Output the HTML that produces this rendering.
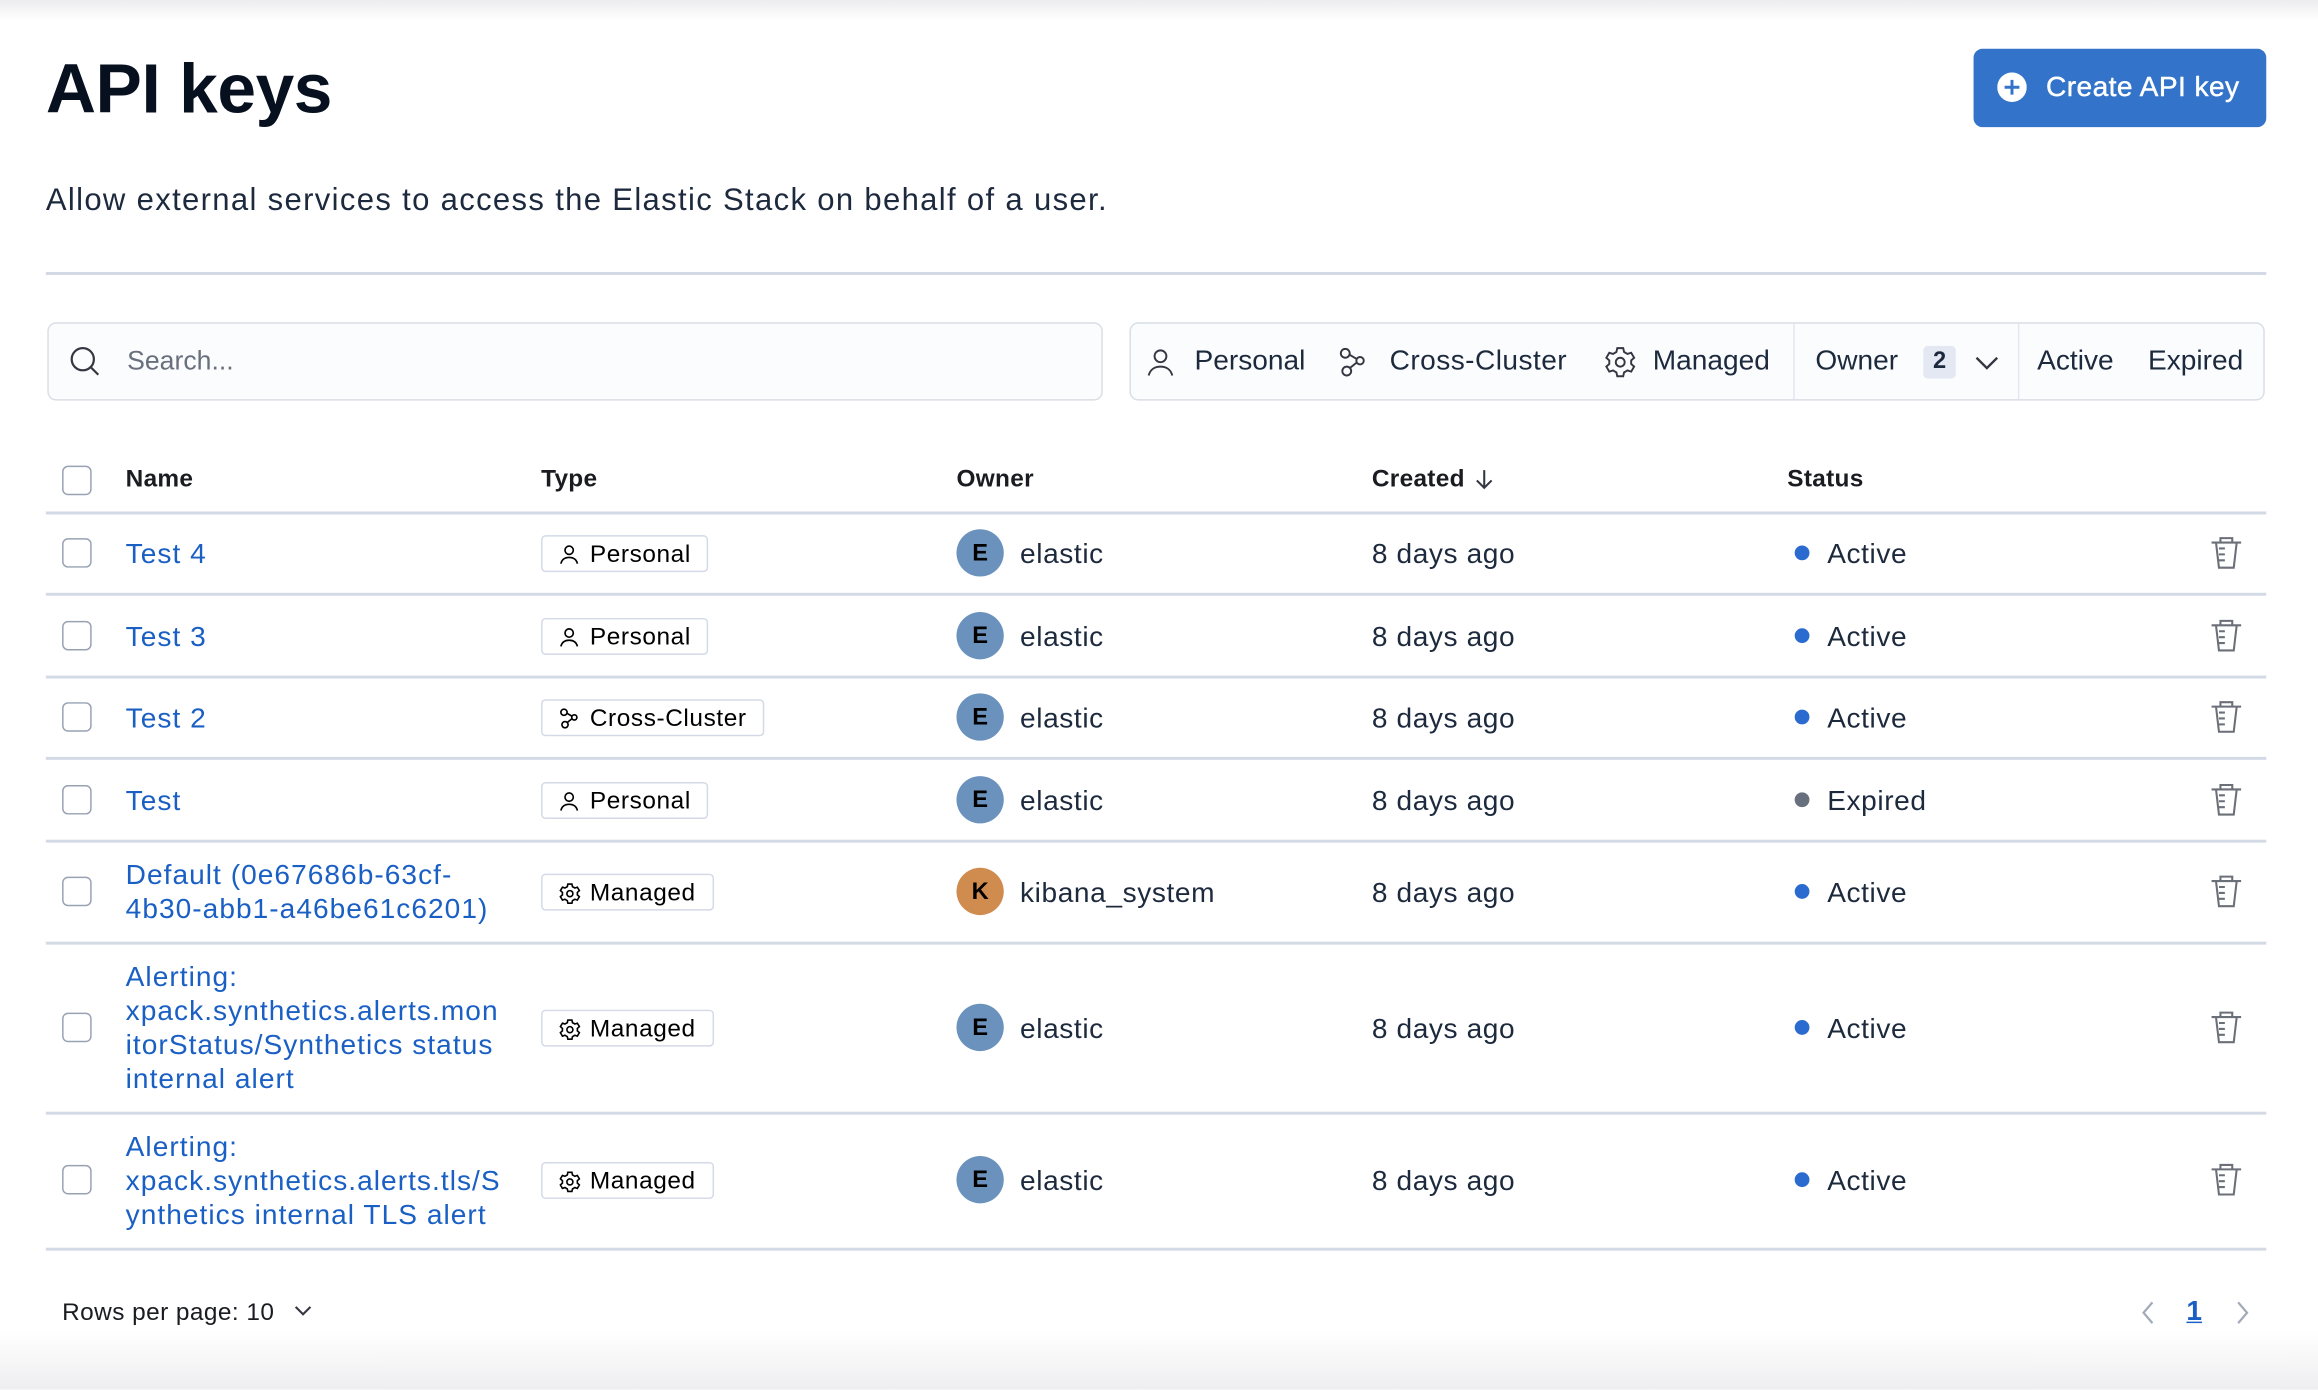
<!DOCTYPE html>
<html><head><meta charset="utf-8"><style>
html,body{margin:0;padding:0;width:2318px;height:1390px;overflow:hidden;background:#fff}
#w{position:absolute;left:0;top:0;width:1568px;height:940px;transform:scale(1.47832);transform-origin:0 0;font-family:"Liberation Sans",sans-serif;color:#1d2a3e}
.a{position:absolute;white-space:nowrap}
.hr{position:absolute;left:31px;width:1502px;height:1px;background:#d3dae6}
.cb{position:absolute;left:42px;width:20px;height:20px;border:1px solid #98a2b3;border-radius:4px;box-sizing:border-box;background:#fff}
.name{position:absolute;left:85px;color:#1a5fc4;font-size:19px;line-height:23px;letter-spacing:0.7px}
.badge{position:absolute;left:366px;height:25px;border:1px solid #d3dae6;border-radius:3px;box-sizing:border-box;font-size:16.5px;color:#000;padding:0 11px 0 32px;line-height:25px;letter-spacing:0.4px}
.badge svg{position:absolute;left:11px;top:5px}
.av{position:absolute;left:647px;width:32px;height:32px;border-radius:50%;background:#6b92bd;color:#000;font-size:16px;font-weight:bold;text-align:center;line-height:33px}
.txt{position:absolute;font-size:19px;color:#1d2a3e;line-height:23px;letter-spacing:0.4px}
.dot{position:absolute;left:1214px;width:10px;height:10px;border-radius:50%;background:#2b6bcf}
.del{position:absolute;left:1495px}
.h{position:absolute;top:315px;font-size:16.5px;font-weight:bold;color:#1a1c21;letter-spacing:0.2px}
</style></head><body><div id="w">
<div style="position:absolute;left:0;top:0;width:1568px;height:14px;background:linear-gradient(#ececee,#fff)"></div>
<div class="a" style="left:31px;top:32px;font-size:47px;font-weight:bold;color:#07101f;letter-spacing:-0.3px">API keys</div>
<div class="a" style="left:1335px;top:33px;width:198px;height:53px;background:#3373c9;border-radius:6px;color:#fff;font-size:19px;line-height:53px;letter-spacing:0.3px;-webkit-text-stroke:0.3px #fff">
<svg style="position:absolute;left:16px;top:16px" width="20" height="20" viewBox="0 0 20 20"><circle cx="10" cy="10" r="10" fill="#fff"/><path d="M10 5v10M5 10h10" stroke="#3373c9" stroke-width="2"/></svg>
<span style="position:absolute;left:49px">Create API key</span></div>
<div class="a" style="left:31px;top:124px;font-size:21px;color:#1d2a3e;letter-spacing:0.9px">Allow external services to access the Elastic Stack on behalf of a user.</div>
<div class="hr" style="top:184px;height:2px"></div>
<div class="a" style="left:32px;top:218px;width:714px;height:53px;border:1px solid #d9dee6;border-radius:6px;box-sizing:border-box;background:#fbfcfd">
<svg style="position:absolute;left:14px;top:15px" width="22" height="22" viewBox="0 0 22 22"><circle cx="9" cy="9" r="7.5" fill="none" stroke="#343741" stroke-width="1.5"/><path d="M14.5 14.5l5 5" stroke="#343741" stroke-width="1.5"/></svg>
<span style="position:absolute;left:53px;top:15px;font-size:18px;color:#69707d">Search...</span></div>
<div class="a" style="left:764px;top:218px;width:768px;height:53px;border:1px solid #d9dee6;border-radius:6px;box-sizing:border-box;background:#fbfcfd;font-size:19px;color:#1d2a3e">
<svg style="position:absolute;left:10px;top:16px" width="20" height="20" viewBox="0 0 20 20" fill="none" stroke="#343741" stroke-width="1.3"><circle cx="10" cy="6" r="4"/><path d="M2 19c1-4 4-6 8-6s7 2 8 6"/></svg>
<span style="position:absolute;left:43px;top:15px">Personal</span>
<svg style="position:absolute;left:140px;top:16px" width="20" height="20" viewBox="0 0 20 20" fill="none" stroke="#343741" stroke-width="1.3"><circle cx="5" cy="4" r="3"/><circle cx="15" cy="9" r="2.5"/><circle cx="6" cy="16" r="3"/><path d="M8 5l5 3M8 14l5-4"/></svg>
<span style="position:absolute;left:175px;top:15px;letter-spacing:0.3px">Cross-Cluster</span>
<svg style="position:absolute;left:320px;top:15px" width="22" height="22" viewBox="0 0 22 22" fill="none" stroke="#343741" stroke-width="1.3"><circle cx="11" cy="11" r="3"/><path d="M9 1.5h4l.6 2.6 2.3 1.3 2.5-.8 2 3.4-2 1.8v2.4l2 1.8-2 3.4-2.5-.8-2.3 1.3-.6 2.6H9l-.6-2.6-2.3-1.3-2.5.8-2-3.4 2-1.8V9.8l-2-1.8 2-3.4 2.5.8 2.3-1.3z"/></svg>
<span style="position:absolute;left:353px;top:15px">Managed</span>
<div style="position:absolute;left:448px;top:0;width:1px;height:51px;background:#e3e8f0"></div>
<span style="position:absolute;left:463px;top:15px">Owner</span>
<span style="position:absolute;left:536px;top:15px;width:22px;height:22px;background:#e3e8f2;border-radius:3px;font-size:16px;font-weight:bold;text-align:center;line-height:22px">2</span>
<svg style="position:absolute;left:570px;top:20px" width="18" height="12" viewBox="0 0 18 12"><path d="M2 3l7 7 7-7" fill="none" stroke="#343741" stroke-width="1.6"/></svg>
<div style="position:absolute;left:600px;top:0;width:1px;height:51px;background:#e3e8f0"></div>
<span style="position:absolute;left:613px;top:15px">Active</span>
<span style="position:absolute;left:688px;top:15px">Expired</span>
</div>
<div class="cb" style="top:315px"></div>
<div class="h" style="left:85px">Name</div><div class="h" style="left:366px">Type</div><div class="h" style="left:647px">Owner</div><div class="h" style="left:928px">Created <svg width="16" height="16" viewBox="0 0 16 16" style="vertical-align:-3px"><path d="M8 2v12M3 9l5 5 5-5" fill="none" stroke="#343741" stroke-width="1.4"/></svg></div><div class="h" style="left:1209px">Status</div>
<div class="hr" style="top:346px;height:2px"></div>
<div class="hr" style="top:401px;height:2px"></div>
<div class="hr" style="top:457px;height:2px"></div>
<div class="hr" style="top:512px;height:2px"></div>
<div class="hr" style="top:568px;height:2px"></div>
<div class="hr" style="top:637px;height:2px"></div>
<div class="hr" style="top:752px;height:2px"></div>
<div class="hr" style="top:844px;height:2px"></div>

<div id="rows"></div>
<div class="a" style="left:42px;top:879px;font-size:16.5px;color:#1a1c21;letter-spacing:0.3px">Rows per page: 10 <svg width="16" height="12" viewBox="0 0 16 12" style="margin-left:6px"><path d="M3 3l5 5 5-5" fill="none" stroke="#343741" stroke-width="1.4"/></svg></div>
<svg class="a" style="left:1446px;top:878px" width="14" height="20" viewBox="0 0 14 20"><path d="M10 3L4 10l6 7" fill="none" stroke="#a2abba" stroke-width="1.5"/></svg>
<div class="a" style="left:1479px;top:877px;font-size:19px;color:#1a5fc4;text-decoration:underline;font-weight:bold">1</div>
<svg class="a" style="left:1510px;top:878px" width="14" height="20" viewBox="0 0 14 20"><path d="M4 3l6 7-6 7" fill="none" stroke="#a2abba" stroke-width="1.5"/></svg>
<div style="position:absolute;left:0;top:900px;width:1568px;height:40px;background:linear-gradient(rgba(240,240,242,0),#eeeef0)"></div>
</div>
<script>
var P='<svg width="14" height="14" viewBox="0 0 20 20" fill="none" stroke="#000" stroke-width="1.6"><circle cx="10" cy="6" r="4"/><path d="M2 19c1-4 4-6 8-6s7 2 8 6"/></svg>';
var C='<svg width="14" height="14" viewBox="0 0 20 20" fill="none" stroke="#000" stroke-width="1.6"><circle cx="5" cy="4" r="3"/><circle cx="15" cy="9" r="2.5"/><circle cx="6" cy="16" r="3"/><path d="M8 5l5 3M8 14l5-4"/></svg>';
var M='<svg width="15" height="15" viewBox="0 0 22 22" fill="none" stroke="#000" stroke-width="1.6"><circle cx="11" cy="11" r="3"/><path d="M9 1.5h4l.6 2.6 2.3 1.3 2.5-.8 2 3.4-2 1.8v2.4l2 1.8-2 3.4-2.5-.8-2.3 1.3-.6 2.6H9l-.6-2.6-2.3-1.3-2.5.8-2-3.4 2-1.8V9.8l-2-1.8 2-3.4 2.5.8 2.3-1.3z"/></svg>';
var D='<svg width="22" height="24" viewBox="0 0 22 24" fill="none" stroke="#6a6f78" stroke-width="1.4"><path d="M1 5h20M7 5V2h8v3M4 5l2 17h10l2-17M6 9h4M6 13h4M6 17h4"/></svg>';
var rows=[[374,["Test 4"],P,"Personal","E","elastic","Active"],[430,["Test 3"],P,"Personal","E","elastic","Active"],[485,["Test 2"],C,"Cross-Cluster","E","elastic","Active"],[541,["Test"],P,"Personal","E","elastic","Expired"],[603,["Default (0e67686b-63cf-","4b30-abb1-a46be61c6201)"],M,"Managed","K","kibana_system","Active"],[695,["Alerting:","xpack.synthetics.alerts.mon","itorStatus/Synthetics status","internal alert"],M,"Managed","E","elastic","Active"],[798,["Alerting:","xpack.synthetics.alerts.tls/S","ynthetics internal TLS alert"],M,"Managed","E","elastic","Active"]];
var h='';rows.forEach(function(r){var y=r[0],n=r[1].length;
h+='<div class="cb" style="top:'+(y-10)+'px"></div>';
h+='<div class="name" style="top:'+(y-n*23/2+1)+'px">'+r[1].join('<br>')+'</div>';
h+='<div class="badge" style="top:'+(y-12)+'px">'+r[2]+r[3]+'</div>';
h+='<div class="av" style="top:'+(y-16)+'px;'+(r[4]=='K'?'background:#d08c4f':'')+'">'+r[4]+'</div>';
h+='<div class="txt" style="left:690px;top:'+(y-10)+'px">'+r[5]+'</div>';
h+='<div class="txt" style="left:928px;top:'+(y-10)+'px">8 days ago</div>';
h+='<div class="dot" style="top:'+(y-5)+'px;'+(r[6]=='Expired'?'background:#69707d':'')+'"></div>';
h+='<div class="txt" style="left:1236px;top:'+(y-10)+'px">'+r[6]+'</div>';
h+='<div class="del" style="top:'+(y-12)+'px">'+D+'</div>';});
document.getElementById('rows').outerHTML=h;
</script>
</body></html>
